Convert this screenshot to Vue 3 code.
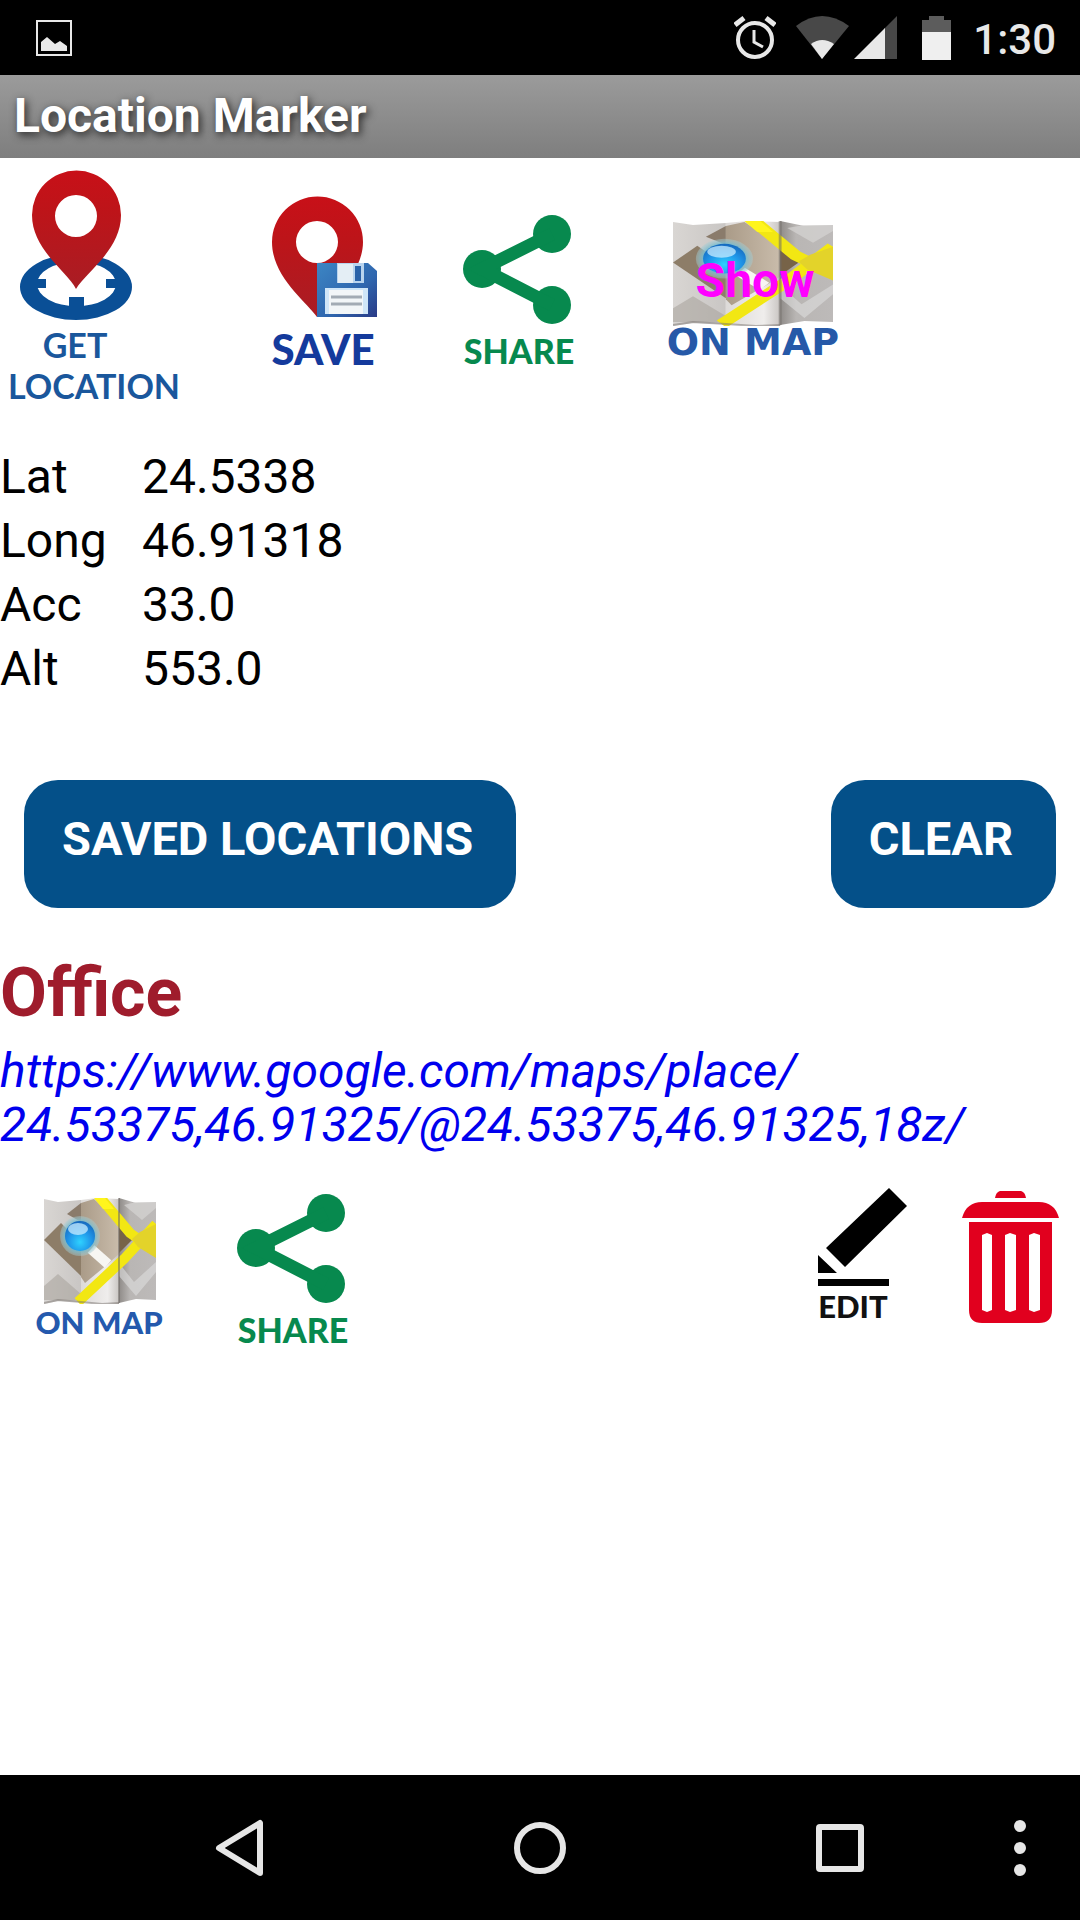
<script setup>
const readings = [
  { label: 'Lat', value: '24.5338' },
  { label: 'Long', value: '46.91318' },
  { label: 'Acc', value: '33.0' },
  { label: 'Alt', value: '553.0' },
]
const placeUrl = 'https://www.google.com/maps/place/24.53375,46.91325/@24.53375,46.91325,18z/'
const [urlHead, urlTail] = [placeUrl.slice(0, 34), placeUrl.slice(34)]
</script>

<template>
  <div class="screen">
    <!-- Shared drawings -->
    <svg class="defs" width="0" height="0" aria-hidden="true">
      <defs>
        <linearGradient id="pinRed" x1="0" y1="0" x2="0" y2="1">
          <stop offset="0" stop-color="#c81018" />
          <stop offset="0.35" stop-color="#bd1419" />
          <stop offset="1" stop-color="#a91d24" />
        </linearGradient>
        <linearGradient id="diskBlue" x1="0" y1="0" x2="1" y2="1">
          <stop offset="0" stop-color="#3c86c4" />
          <stop offset="0.6" stop-color="#2f66ae" />
          <stop offset="1" stop-color="#2a3a86" />
        </linearGradient>
        <linearGradient id="foldLeft"><stop offset="0" stop-color="#d9d6d3" /><stop offset="1" stop-color="#c9c6c4" /></linearGradient>
        <linearGradient id="foldMid"><stop offset="0" stop-color="#dddad8" /><stop offset="0.7" stop-color="#efedec" /><stop offset="1" stop-color="#c9c5c2" /></linearGradient>
        <linearGradient id="foldRight"><stop offset="0" stop-color="#8f8b88" /><stop offset="0.3" stop-color="#b9b6b4" /><stop offset="1" stop-color="#bdbab9" /></linearGradient>
        <linearGradient id="tan"><stop offset="0" stop-color="#aa9b88" /><stop offset="1" stop-color="#c9bcab" /></linearGradient>
        <radialGradient id="ball" cx="0.5" cy="0.7" r="0.7">
          <stop offset="0" stop-color="#2fd2ff" />
          <stop offset="0.55" stop-color="#1f95e8" />
          <stop offset="1" stop-color="#1668bd" />
        </radialGradient>
        <radialGradient id="glow">
          <stop offset="0.7" stop-color="#6fb9cf" />
          <stop offset="1" stop-color="#a9cdd2" stop-opacity="0.4" />
        </radialGradient>
      </defs>
      <symbol id="mapArt" viewBox="0 0 112 106" preserveAspectRatio="none">
        <path d="M0 1L14 4L37 2V104L14 103L0 106Z" fill="url(#foldLeft)" />
        <path d="M37 2L52 0L75 1V106L55 106L37 104Z" fill="url(#foldMid)" />
        <path d="M75 0L92 5L112 4V102L92 101L75 105Z" fill="url(#foldRight)" />
        <path d="M0 88L14 76L37 96V102H0Z" fill="#aaa59f" opacity="0.6" />
        <path d="M0 42L17 25L37 45V78Z" fill="#8d7d68" />
        <path d="M23 16L37 5V24Z" fill="#8a7b6b" />
        <path d="M37 5L50 1L75 24V56L64 66L41 85L37 79Z" fill="url(#tan)" />
        <path d="M75 22L90 40L75 55Z" fill="#776348" />
        <path d="M75 65L90 84L112 64V74L92 98L75 78Z" fill="#dedede" opacity="0.6" />
        <path d="M80 7L98 22L112 10V4H92Z" fill="#d6d4d3" opacity="0.7" />
        <path d="M47 51L64 66" stroke="#f7f6f2" stroke-width="10" />
        <path d="M55 -2L86 35L112 53M34 104L80 61L112 26" fill="none" stroke="#f2e713" stroke-width="10" />
        <path d="M50 0H61L70 11H59Z" fill="#fff51d" />
        <path d="M112 26V60L94 49L88 41L96 34Z" fill="#e3d32a" />
        <path d="M75 0V105" stroke="#6f6a66" stroke-width="2" opacity="0.55" />
        <path d="M0 105L14 102L37 104L58 106L75 105" fill="none" stroke="#77726d" stroke-width="2" opacity="0.5" />
        <circle cx="36" cy="38" r="20" fill="url(#glow)" />
        <circle cx="36" cy="38" r="15" fill="url(#ball)" />
        <ellipse cx="34" cy="31" rx="10" ry="6" fill="#c8ecff" opacity="0.75" />
      </symbol>
      <symbol id="shareArt" viewBox="0 0 120 160">
        <g fill="#07894e">
          <circle cx="22" cy="58" r="19" /><circle cx="92" cy="23" r="19" /><circle cx="92" cy="94" r="19" />
        </g>
        <path d="M92 23L22 58L92 94" fill="none" stroke="#07894e" stroke-width="13" />
      </symbol>
    </svg>

    <header class="status">
      <svg class="picture" width="36" height="36" viewBox="0 0 36 36" aria-hidden="true">
        <rect x="1" y="1" width="34" height="34" fill="none" stroke="#e8e8e8" stroke-width="2" />
        <path d="M5 31V22L11 17L19 24L24 21L31 26V31Z" fill="#e8e8e8" />
      </svg>
      <svg class="alarm" width="42" height="44" viewBox="0 0 42 44" aria-hidden="true">
        <circle cx="21" cy="24" r="17" fill="none" stroke="#e8e8e8" stroke-width="4" />
        <path d="M20 14V26L29 31" fill="none" stroke="#e8e8e8" stroke-width="3" />
        <path d="M1 9L10 2M32 2L41 9" stroke="#e8e8e8" stroke-width="5" />
      </svg>
      <svg class="wifi" width="53" height="43" viewBox="0 0 53 43" aria-hidden="true">
        <path d="M0 10Q26 -10 53 10L26 43Z" fill="#484848" />
        <path d="M15 28Q26 20 38 28L26 43Z" fill="#e8e8e8" />
      </svg>
      <svg class="signal" width="43" height="43" viewBox="0 0 43 43" aria-hidden="true">
        <path d="M43 0V43H30V13Z" fill="#484848" />
        <path d="M0 43L31 12V43Z" fill="#e8e8e8" />
      </svg>
      <svg class="battery" width="29" height="44" viewBox="0 0 29 44" aria-hidden="true">
        <path d="M0 4H7V0H22V4H29V17H0Z" fill="#5c5c5c" />
        <rect y="16" width="29" height="28" fill="#efefef" />
      </svg>
      <time class="clock">1:30</time>
    </header>

    <h1 class="title">Location Marker</h1>

    <main class="content">
      <div class="toolbar">
        <button class="tool get" type="button">
          <svg width="190" height="245" viewBox="0 0 190 245">
            <path fill="#0a4f96" fill-rule="evenodd" d="M20 121a56 33 0 1 0 112 0a56 33 0 1 0 -112 0ZM37 118a39 22 0 1 0 79 0a39 22 0 1 0 -79 0Z" />
            <path fill="#0a4f96" d="M34 113H46V122H34ZM106 113H118V122H106ZM69 131H84V144H69Z" />
            <path fill="url(#pinRed)" fill-rule="evenodd" d="M76 123C68 106 32 84 32 49A44 44 0 0 1 121 49C121 84 86 106 76 123ZM97 50a21 21 0 1 0 -42 0a21 21 0 1 0 42 0Z" />
            <text class="cap calm" x="75" y="192" text-anchor="middle">GET</text>
            <text class="cap calm" x="94" y="233" text-anchor="middle">LOCATION</text>
          </svg>
        </button>
        <button class="tool save" type="button">
          <svg width="130" height="186" viewBox="0 0 130 186">
            <path fill="url(#pinRed)" fill-rule="evenodd" d="M57 126C46 110 12 86 12 51A45 45 0 0 1 103 51C103 84 68 110 57 126ZM78 51a21 21 0 1 0 -42 0a21 21 0 1 0 42 0Z" />
            <path d="M57 72H108L117 80V126H57Z" fill="url(#diskBlue)" />
            <rect x="77" y="72" width="27" height="20" fill="#b9d4ee" />
            <rect x="78" y="73" width="15" height="19" fill="#e4eef5" />
            <rect x="95" y="75" width="6" height="15" fill="#2a62a8" />
            <rect x="65" y="97" width="43" height="26" fill="#cfe6f8" />
            <rect x="69" y="99" width="34" height="24" fill="#f2f6f8" />
            <path d="M71 106H102M71 113H102" stroke="#a2abb4" stroke-width="3" />
            <text class="cap big" x="63" y="174" text-anchor="middle">SAVE</text>
          </svg>
        </button>
        <button class="tool share" type="button">
          <svg width="120" height="164" viewBox="0 0 120 164">
            <use href="#shareArt" width="120" height="160" />
            <text class="cap green" x="59" y="153" text-anchor="middle">SHARE</text>
          </svg>
        </button>
        <button class="tool map" type="button">
          <svg width="210" height="155" viewBox="0 0 210 155">
            <use href="#mapArt" x="23" y="10" width="160" height="105" />
            <text class="cap wide" x="103" y="144" text-anchor="middle">ON MAP</text>
          </svg>
          <span class="show">Show</span>
        </button>
      </div>

      <table class="readings">
        <tbody>
          <tr v-for="r in readings" :key="r.label">
            <th scope="row">{{ r.label }}</th>
            <td>{{ r.value }}</td>
          </tr>
        </tbody>
      </table>

      <div class="actions">
        <button class="pill" type="button">SAVED LOCATIONS</button>
        <button class="pill" type="button">CLEAR</button>
      </div>

      <section class="place">
        <h2>Office</h2>
        <a class="url" :href="placeUrl">{{ urlHead }}<wbr />{{ urlTail }}</a>
        <div class="place-tools">
          <button class="tool low" type="button">
            <svg width="140" height="160" viewBox="0 0 140 160">
              <use href="#mapArt" x="14" y="8" width="112" height="106" />
              <text class="cap blue" x="69" y="144" text-anchor="middle">ON MAP</text>
            </svg>
          </button>
          <button class="tool low" type="button">
            <svg width="120" height="164" viewBox="0 0 120 164">
              <use href="#shareArt" width="120" height="160" />
              <text class="cap green" x="59" y="153" text-anchor="middle">SHARE</text>
            </svg>
          </button>
          <button class="tool edit" type="button">
            <svg width="105" height="150" viewBox="0 0 105 150">
              <path d="M79 8L97 26L35 87L16 68ZM8 75L27 93H8ZM8 99H79V106H8Z" />
              <text class="cap black" x="43" y="138" text-anchor="middle">EDIT</text>
            </svg>
          </button>
          <button class="tool" type="button" aria-label="Delete">
            <svg width="110" height="150" viewBox="0 0 110 150">
              <g fill="#e1001e">
                <path d="M40 18C41 13 43 11 46 11H65C68 11 70 13 71 18Z" />
                <path d="M7 38C10 27 17 22 27 22H84C94 22 101 27 104 38Z" />
                <path fill-rule="evenodd" d="M14 42H97V130Q97 143 84 143H27Q14 143 14 130ZM27 55L32 53L37 55V130L32 132L27 130ZM50 55L55 53L61 55V130L55 132L50 130ZM74 55L79 53L85 55V130L79 132L74 130Z" />
              </g>
            </svg>
          </button>
        </div>
      </section>
    </main>

    <nav class="navbar">
      <button type="button" aria-label="Back">
        <svg width="52" height="58" viewBox="0 0 52 58"><path d="M46 4V54L5 29Z" fill="none" stroke="#e6e6e6" stroke-width="6" stroke-linejoin="round" /></svg>
      </button>
      <button type="button" aria-label="Home">
        <svg width="52" height="52" viewBox="0 0 52 52"><circle cx="26" cy="26" r="23" fill="none" stroke="#e6e6e6" stroke-width="6" /></svg>
      </button>
      <button type="button" aria-label="Recents">
        <svg width="48" height="48" viewBox="0 0 48 48"><rect x="3" y="3" width="42" height="42" rx="1" fill="none" stroke="#e6e6e6" stroke-width="6" stroke-linejoin="round" /></svg>
      </button>
      <button class="more" type="button" aria-label="More">
        <svg width="12" height="56" viewBox="0 0 12 56" fill="#e6e6e6"><circle cx="6" cy="6" r="6" /><circle cx="6" cy="28" r="6" /><circle cx="6" cy="50" r="6" /></svg>
      </button>
    </nav>
  </div>
</template>

<style>
body {
  margin: 0;
  background: #fff;
}
</style>

<style scoped>
.screen {
  min-height: 100vh;
  display: flex;
  flex-direction: column;
  font-family: Roboto, sans-serif;
  font-size: 48px;
  color: #000;
  background: #fff;
}
.defs {
  position: absolute;
}
svg {
  display: block;
}
button {
  border: 0;
  padding: 0;
  margin: 0;
  background: none;
  font: inherit;
}
.status {
  display: flex;
  align-items: center;
  height: 75px;
  padding: 0 24px 0 36px;
  background: #000;
}
.picture {
  margin-right: auto;
}
.wifi {
  margin-left: 20px;
}
.signal {
  margin-left: 5px;
}
.battery {
  margin: 0 22px 0 25px;
}
.clock {
  padding-top: 4px;
  font-size: 42px;
  font-weight: 500;
  line-height: 48px;
  color: #e8e8e8;
}
.title {
  margin: 0;
  padding: 0 14px 1px;
  font-size: 48px;
  font-weight: 700;
  line-height: 82px;
  color: #fff;
  text-shadow: 2px 3px 9px #222;
  background: linear-gradient(#9b9b9b, #7e7e7e);
}
.content {
  flex: 1;
}
.toolbar {
  display: flex;
  align-items: flex-start;
  height: 279px;
  padding-top: 8px;
}
.save {
  margin: 25px 0 0 70px;
}
.share {
  margin: 45px 0 0 70px;
}
.map {
  position: relative;
  margin: 45px 0 0 70px;
}
.show {
  position: absolute;
  inset: 0;
  line-height: 140px;
  text-align: center;
  font-weight: 700;
  color: #f0f;
}
.cap {
  font-family: Lato, "Open Sans", sans-serif;
  font-weight: 700;
}
.calm {
  font-size: 34px;
  fill: #1a579c;
}
.big {
  font-size: 42px;
  font-weight: 900;
  fill: #143a9c;
}
.green {
  font-size: 34px;
  font-weight: 900;
  fill: #07894e;
}
.wide {
  font-family: "DejaVu Sans", sans-serif;
  font-size: 38px;
  fill: #2659a8;
}
.blue {
  font-size: 31px;
  font-weight: 900;
  fill: #2459ad;
}
.black {
  font-size: 31px;
  font-weight: 900;
  fill: #111;
}
.readings {
  border-collapse: collapse;
  line-height: 64px;
}
.readings th,
.readings td {
  padding: 0;
  text-align: left;
  font-weight: 400;
}
.readings th {
  width: 142px;
}
.actions {
  display: flex;
  justify-content: space-between;
  padding: 79px 24px 0;
}
.pill {
  height: 128px;
  padding: 0 43px 12px 38px;
  border-radius: 34px;
  background: #045089;
  color: #fff;
  font-size: 47px;
  font-weight: 700;
}
.place {
  padding-top: 46px;
}
.place h2 {
  margin: 0;
  font-size: 68px;
  font-weight: 700;
  line-height: 78px;
  color: #9f1c2c;
}
.url {
  display: block;
  margin-top: 12px;
  line-height: 54px;
  font-style: italic;
  color: #00e;
  text-decoration: none;
}
.place-tools {
  display: flex;
  align-items: flex-start;
  padding: 28px 15px 0 30px;
}
.place-tools .low {
  margin-top: 10px;
}
.place-tools .low + .low {
  margin-left: 64px;
}
.place-tools .edit {
  margin-left: auto;
}
.place-tools .edit + .tool {
  margin-left: 40px;
}
.navbar {
  display: grid;
  grid-template-columns: 1fr 1fr 1fr 60px;
  height: 145px;
  padding: 0 30px 0 90px;
  background: #000;
}
.navbar button {
  display: grid;
  place-items: center;
}
</style>
